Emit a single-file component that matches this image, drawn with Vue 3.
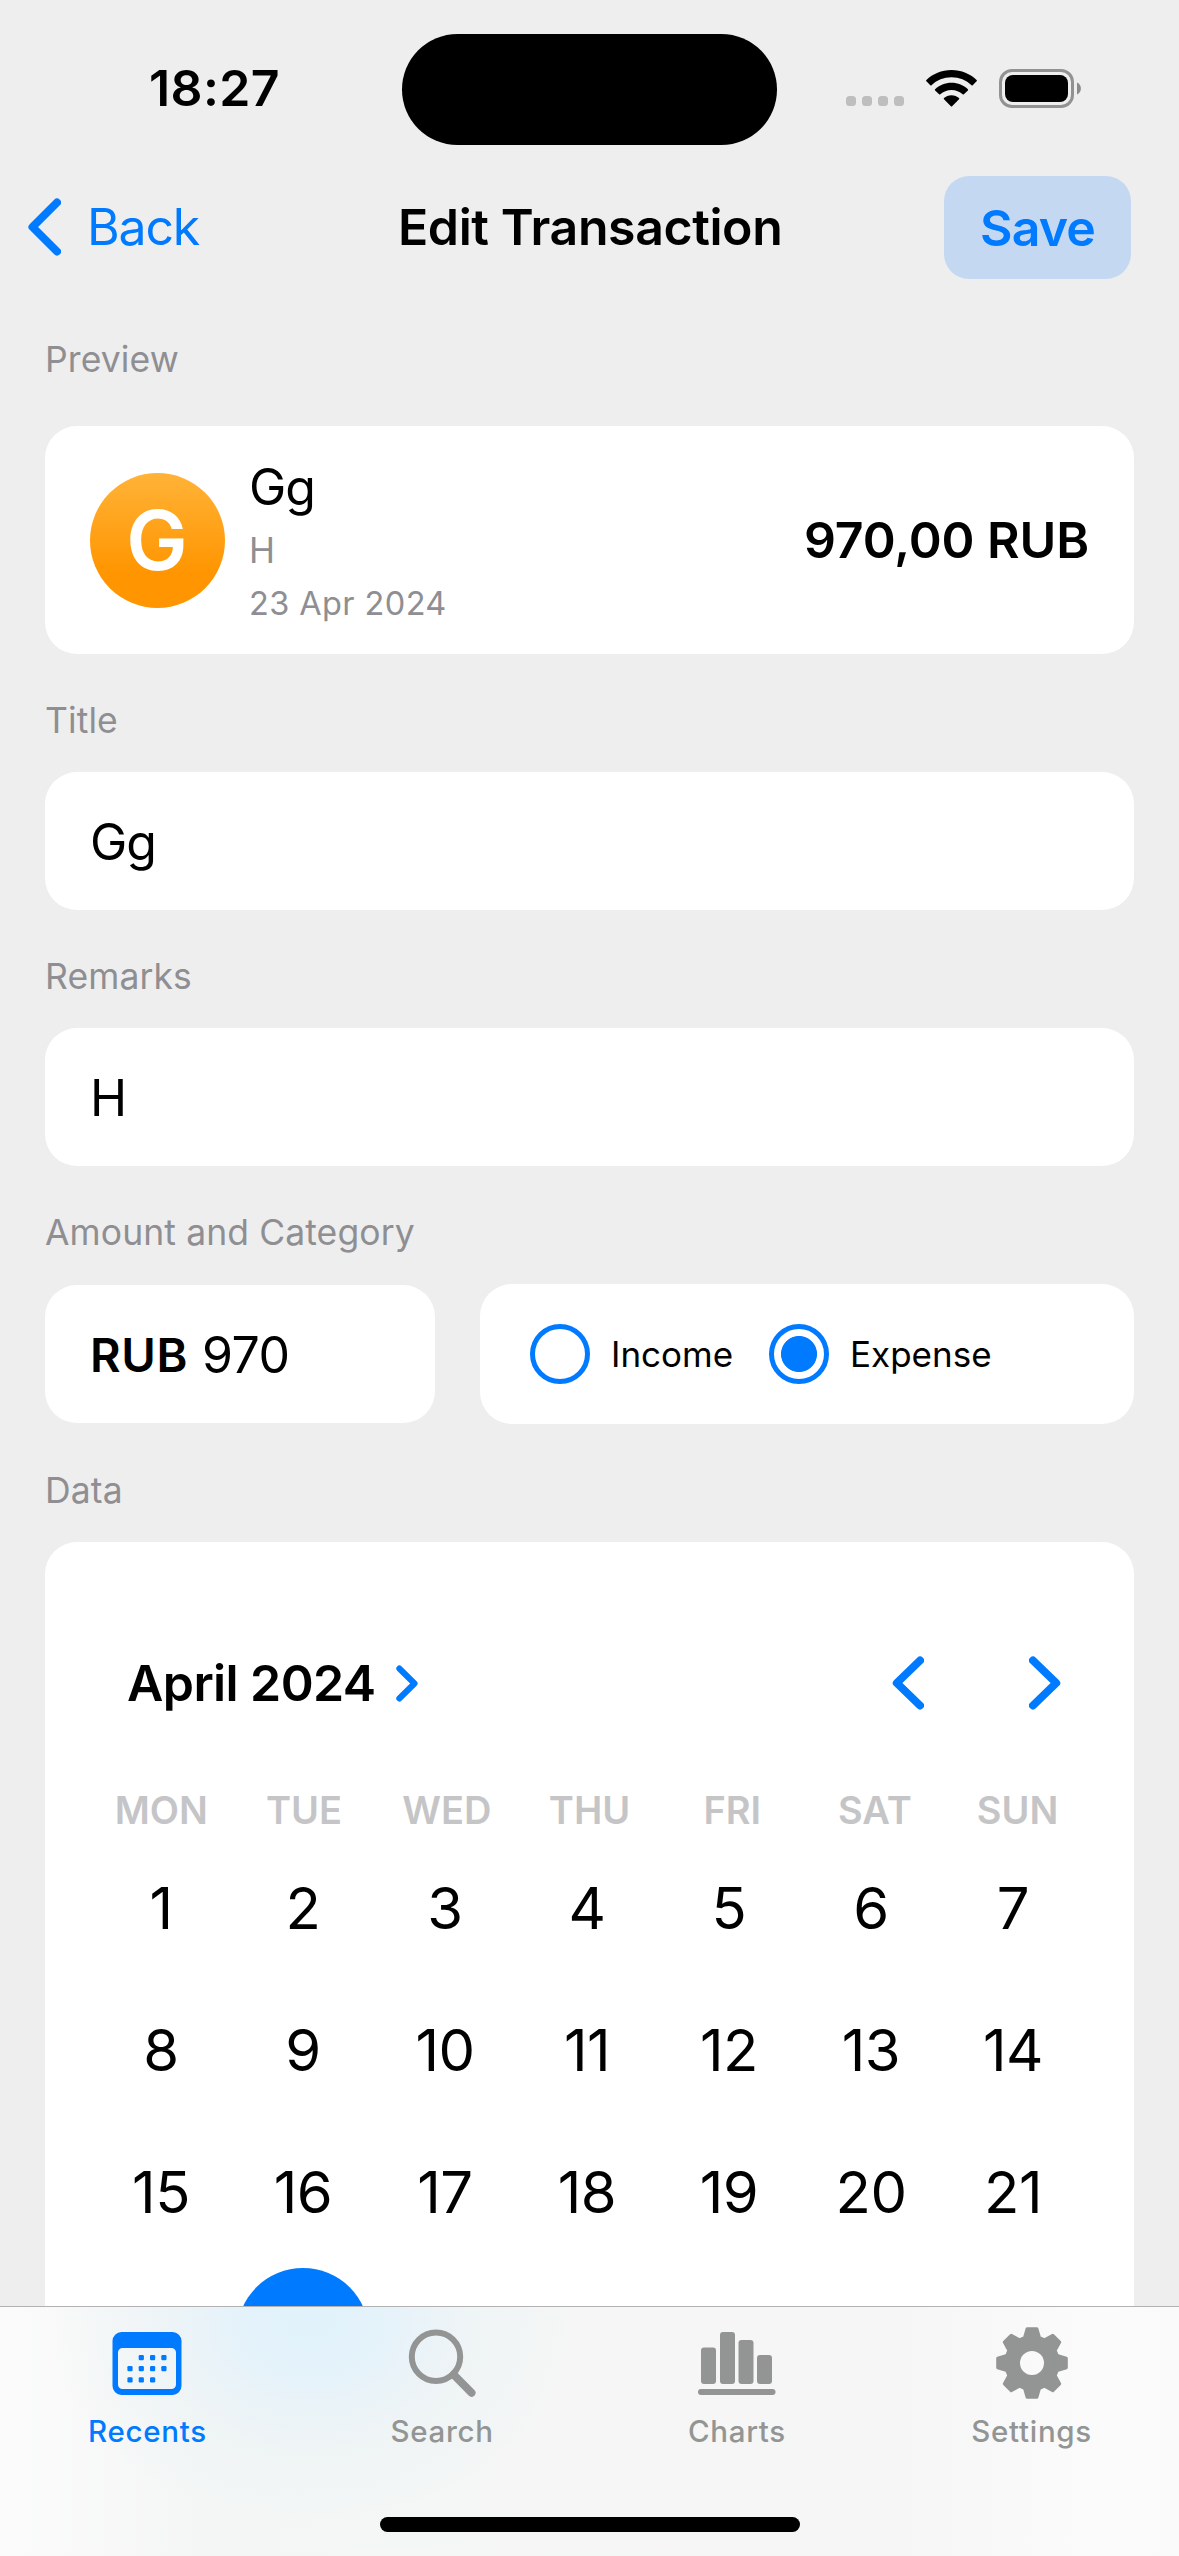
<script setup>
const weekdays = ['MON', 'TUE', 'WED', 'THU', 'FRI', 'SAT', 'SUN']
const days = Array.from({ length: 28 }, (_, i) => i + 1)
const selectedDay = 23

// Outline of an eight-toothed gear centred on the origin
const toothProfile = [[-7.4, 25.2], [-4.8, 34.2], [4.8, 34.2], [7.4, 25.2]]
const gearPoints = Array.from({ length: 8 }, (_, i) => {
  const a = (i * Math.PI) / 4
  return toothProfile
    .map(([x, y]) => {
      const px = x * Math.cos(a) + y * Math.sin(a)
      const py = -x * Math.sin(a) + y * Math.cos(a)
      return `${px.toFixed(2)},${py.toFixed(2)}`
    })
    .join(' ')
}).join(' ')

const calendarDots = [
  [1, 0], [2, 0], [3, 0],
  [0, 1], [1, 1], [2, 1], [3, 1],
  [0, 2], [1, 2], [2, 2],
]
</script>

<template>
  <div class="screen">
    <header class="status">
      <span class="time">18:27</span>
      <div class="island"></div>
      <div class="indicators">
        <div class="signal"><i></i><i></i><i></i><i></i></div>
        <svg class="wifi" width="51" height="37" viewBox="0 0 51 37">
          <path d="M25.5 0C35.4 0 44.3 3.8 50.6 10.1Q51.2 10.7 50.6 11.3L46.7 15.2Q46.1 15.8 45.5 15.2C40.3 10.3 33.2 7.3 25.5 7.3S10.7 10.3 5.5 15.2Q4.9 15.8 4.3 15.2L.4 11.3Q-.2 10.7 .4 10.1C6.7 3.8 15.6 0 25.5 0Z" />
          <path d="M25.5 12.7C31.9 12.7 37.7 15.2 41.9 19.2Q42.5 19.8 41.9 20.4L37.9 24.3Q37.3 24.9 36.7 24.3C33.7 21.6 29.8 20 25.5 20S17.3 21.6 14.3 24.3Q13.7 24.9 13.1 24.3L9.1 20.4Q8.5 19.8 9.1 19.2C13.3 15.2 19.1 12.7 25.5 12.7Z" />
          <path d="M25.5 25.3C28.4 25.3 31.1 26.4 33 28.1Q33.6 28.7 33 29.3L26.1 36.3Q25.5 36.9 24.9 36.3L18 29.3Q17.4 28.7 18 28.1C19.9 26.4 22.6 25.3 25.5 25.3Z" />
        </svg>
        <svg class="battery" width="83" height="39" viewBox="0 0 83 39">
          <rect x="1.5" y="1.5" width="72" height="36" rx="11.5" fill="none" stroke="#929292" stroke-width="3" />
          <rect x="6" y="6" width="63" height="27" rx="8" />
          <path d="M78 13.5A6.6 6.6 0 0 1 78 25.5Z" fill="#8b8b8b" />
        </svg>
      </div>
    </header>

    <nav class="navbar">
      <button class="back">
        <svg width="33" height="58" viewBox="0 0 33 58">
          <path d="M29 4.5L4.5 29L29 53.5" stroke-width="8" />
        </svg>
        <span>Back</span>
      </button>
      <h1>Edit Transaction</h1>
      <button class="save"><span>Save</span></button>
    </nav>

    <main>
      <h2 class="first">Preview</h2>
      <section class="card preview">
        <div class="avatar"><span>G</span></div>
        <div class="details">
          <span class="name">Gg</span>
          <span class="remark">H</span>
          <span class="date">23 Apr 2024</span>
        </div>
        <span class="sum">970,00 RUB</span>
      </section>

      <h2>Title</h2>
      <section class="card field"><span>Gg</span></section>

      <h2>Remarks</h2>
      <section class="card field"><span>H</span></section>

      <h2>Amount and Category</h2>
      <div class="row">
        <section class="card field amount">
          <b>RUB</b><span>970</span>
        </section>
        <section class="card category">
          <label class="option"><i class="radio"></i><span>Income</span></label>
          <label class="option"><i class="radio on"></i><span>Expense</span></label>
        </section>
      </div>

      <h2>Data</h2>
      <section class="card calendar">
        <div class="cal-head">
          <span class="month">April 2024</span>
          <svg width="22" height="37" viewBox="0 0 22 37">
            <path d="M3.3 3.5L18.5 18.5L3.3 33.5" stroke-width="6" />
          </svg>
          <svg class="prev" width="32" height="54" viewBox="0 0 32 54">
            <path d="M28 4.5L4.8 27L28 49.5" stroke-width="8" />
          </svg>
          <svg width="32" height="54" viewBox="0 0 32 54">
            <path d="M4 4.5L27.2 27L4 49.5" stroke-width="8" />
          </svg>
        </div>
        <div class="weekdays">
          <span v-for="d in weekdays" :key="d">{{ d }}</span>
        </div>
        <div class="days">
          <span v-for="d in days" :key="d" class="day">
            <b :class="{ selected: d === selectedDay }">{{ d }}</b>
          </span>
        </div>
      </section>
    </main>

    <footer class="tabbar">
      <div class="tabs">
        <div class="tab active">
          <svg width="76" height="76" viewBox="-38 -38 76 76">
            <path fill-rule="evenodd" d="M-25.5 -31H25.5A9 9 0 0 1 34.5 -22V23A9 9 0 0 1 25.5 32H-25.5A9 9 0 0 1 -34.5 23V-22A9 9 0 0 1 -25.5 -31ZM-24.5 -15A4.5 4.5 0 0 0 -29 -10.5V21.5A4.5 4.5 0 0 0 -24.5 26H24.5A4.5 4.5 0 0 0 29 21.5V-10.5A4.5 4.5 0 0 0 24.5 -15Z" />
            <rect v-for="([c, r], i) in calendarDots" :key="i" :x="-19.6 + c * 11.3" :y="-8 + r * 11.1" width="5.2" height="5.2" rx="1.2" />
          </svg>
          <span>Recents</span>
        </div>
        <div class="tab">
          <svg width="76" height="76" viewBox="-38 -38 76 76">
            <circle cx="-6" cy="-6.2" r="24.2" fill="none" stroke="currentColor" stroke-width="6" />
            <path d="M11.5 11.5L29.5 29.8" stroke="currentColor" stroke-width="8" stroke-linecap="round" />
          </svg>
          <span>Search</span>
        </div>
        <div class="tab">
          <svg width="78" height="76" viewBox="-39 -38 78 76">
            <rect x="-36" y="-15.5" width="15" height="36.5" rx="3" />
            <rect x="-17" y="-31" width="15" height="52" rx="3" />
            <rect x="1.5" y="-23" width="15" height="44" rx="3" />
            <rect x="20" y="-8" width="15" height="29" rx="3" />
            <rect x="-39" y="26" width="77.5" height="6" rx="3" />
          </svg>
          <span>Charts</span>
        </div>
        <div class="tab">
          <svg width="76" height="76" viewBox="-38 -38 76 76">
            <mask id="gear-hole">
              <rect x="-38" y="-38" width="76" height="76" fill="#fff" />
              <circle r="12" fill="#000" />
            </mask>
            <polygon :points="gearPoints" mask="url(#gear-hole)" stroke="currentColor" stroke-width="3.2" stroke-linejoin="round" />
          </svg>
          <span>Settings</span>
        </div>
      </div>
      <div class="home"></div>
    </footer>
  </div>
</template>

<style>
body {
  margin: 0;
  background: #eee;
}
</style>

<style scoped>
.screen {
  position: relative;
  width: 1179px;
  height: 2556px;
  overflow: hidden;
  background: #eee;
  color: #000;
  font-family: Inter, "Liberation Sans", sans-serif;
}
span,
b,
h1,
h2 {
  white-space: nowrap;
}
button {
  border: 0;
  padding: 0;
  background: none;
  color: #007aff;
  font: inherit;
}
svg {
  flex: none;
  display: block;
  fill: currentColor;
}

.status {
  height: 176px;
  display: grid;
  grid-template-columns: 402px 375px 402px;
  align-items: center;
}
.time {
  padding-left: 149px;
  font-size: 50px;
  font-weight: 600;
  letter-spacing: 0.4px;
}
.island {
  height: 111px;
  margin-top: 2px;
  border-radius: 56px;
  background: #000;
}
.indicators {
  display: flex;
  align-items: center;
  padding-left: 69px;
}
.signal {
  display: flex;
  gap: 6px;
  margin-top: 26px;
}
.signal i {
  width: 10px;
  height: 10px;
  border-radius: 3.5px;
  background: #bebebe;
}
.wifi {
  margin-left: 22px;
}
.battery {
  margin-left: 22px;
}

.navbar {
  height: 103px;
  display: grid;
  grid-template-columns: 401px 380px 1fr;
  align-items: center;
}
.back {
  display: flex;
  align-items: center;
  gap: 26px;
  padding-left: 28px;
  font-size: 50px;
  letter-spacing: -1.2px;
}
.back svg {
  margin-bottom: 2px;
}
.back span {
  margin-bottom: 2px;
}
.back svg,
.cal-head svg {
  fill: none;
  stroke: #007aff;
  stroke-linecap: round;
  stroke-linejoin: round;
}
h1 {
  margin: 0 0 2px -3px;
  font-size: 50px;
  font-weight: 600;
  letter-spacing: -0.4px;
}
.save {
  justify-self: end;
  width: 187px;
  height: 103px;
  margin-right: 48px;
  border-radius: 25px;
  background: #c4d9f1;
  font-size: 50px;
  font-weight: 600;
  letter-spacing: -0.8px;
}

main {
  padding: 0 45px;
}
h2 {
  height: 41px;
  margin: 46px 0 31px;
  font-size: 35.5px;
  line-height: 41px;
  font-weight: 400;
  letter-spacing: 0.1px;
  color: #8e8e93;
}
h2.first {
  margin: 60px 0 46px;
}
.card {
  box-sizing: border-box;
  border-radius: 32px;
  background: #fff;
}
.preview {
  height: 228px;
  display: flex;
  align-items: center;
  padding: 0 45px;
}
.avatar {
  width: 135px;
  height: 135px;
  display: flex;
  align-items: center;
  justify-content: center;
  border-radius: 50%;
  background: linear-gradient(#ffb338, #ff9500 75%);
  color: #fff;
  font-size: 82px;
  font-weight: 600;
}
.avatar span {
  margin-right: 1px;
}
.details {
  flex: 1;
  display: flex;
  flex-direction: column;
  gap: 11.5px;
  margin-left: 24px;
  color: #8e8e93;
}
.name {
  color: #000;
  font-size: 50px;
  line-height: 61px;
  letter-spacing: -1px;
}
.remark {
  font-size: 35px;
  line-height: 43px;
}
.date {
  font-size: 32.5px;
  line-height: 40px;
  letter-spacing: 0.4px;
}
.sum {
  font-size: 50px;
  font-weight: 600;
  letter-spacing: -0.1px;
}
.field {
  height: 138px;
  display: flex;
  align-items: center;
  padding-left: 45px;
  font-size: 50px;
  letter-spacing: -1px;
}
.field > span {
  margin-top: 2px;
}
.row {
  height: 140px;
  display: flex;
  align-items: center;
  gap: 45px;
}
.amount {
  width: 390px;
  letter-spacing: -0.5px;
}
.amount b {
  width: 112px;
  font-size: 47px;
  font-weight: 600;
  letter-spacing: 0.6px;
}
.category {
  flex: 1;
  height: 140px;
  display: flex;
  align-items: center;
  padding-left: 50px;
  font-size: 35px;
}
.option {
  display: flex;
  align-items: center;
  width: 239px;
}
.radio {
  box-sizing: border-box;
  width: 60px;
  height: 60px;
  margin-right: 21px;
  border: 5px solid #007aff;
  border-radius: 50%;
}
.radio.on {
  background: radial-gradient(circle, #007aff 17.6px, #fff 18.4px);
}

.calendar {
  height: 1100px;
  padding: 96px 45px 0;
}
.cal-head {
  height: 90px;
  display: flex;
  align-items: center;
  padding: 0 28px 0 37px;
}
.month {
  width: 269px;
  font-size: 50px;
  font-weight: 600;
  letter-spacing: -0.6px;
}
.cal-head .prev {
  margin-left: auto;
  margin-right: 105px;
}
.weekdays {
  height: 54px;
  margin-top: 55px;
  display: grid;
  grid-template-columns: repeat(7, 1fr);
  align-items: center;
  text-align: center;
  color: #c5c5c7;
  font-size: 38px;
  font-weight: 600;
}
.days {
  width: 994px;
  display: grid;
  grid-template-columns: repeat(7, 142px);
  grid-auto-rows: 142px;
}
.day {
  display: flex;
  align-items: center;
  justify-content: center;
  font-size: 58px;
  letter-spacing: -0.5px;
}
.day b {
  width: 132px;
  height: 132px;
  line-height: 132px;
  border-radius: 50%;
  text-align: center;
  font-weight: 400;
}
.day b.selected {
  background: #007aff;
  color: #fff;
}

.tabbar {
  position: absolute;
  left: 0;
  bottom: 0;
  width: 1179px;
  height: 250px;
  box-sizing: border-box;
  border-top: 1px solid #b2b2b2;
  background:
    radial-gradient(ellipse 260px 210px at 310px 10px, #e1f2fc 0, #e4f2fa 25%, rgba(236, 243, 246, 0.7) 60%, rgba(245, 246, 246, 0) 100%),
    linear-gradient(90deg, #fbfbfb 0, #f4f6f5 200px, #f6f6f6 900px, #fafbfa 1100px, #fafafa 1179px);
}
.tabs {
  display: grid;
  grid-template-columns: repeat(4, 1fr);
  padding-top: 18px;
}
.tab {
  display: flex;
  flex-direction: column;
  align-items: center;
  color: #939594;
  font-size: 29.5px;
  font-weight: 500;
}
.tab.active {
  color: #007aff;
}
.tab span {
  margin-top: 10px;
  line-height: 40px;
  letter-spacing: 0.7px;
}
.home {
  width: 420px;
  height: 15px;
  margin: 66px auto 0;
  border-radius: 8px;
  background: #000;
}
</style>
